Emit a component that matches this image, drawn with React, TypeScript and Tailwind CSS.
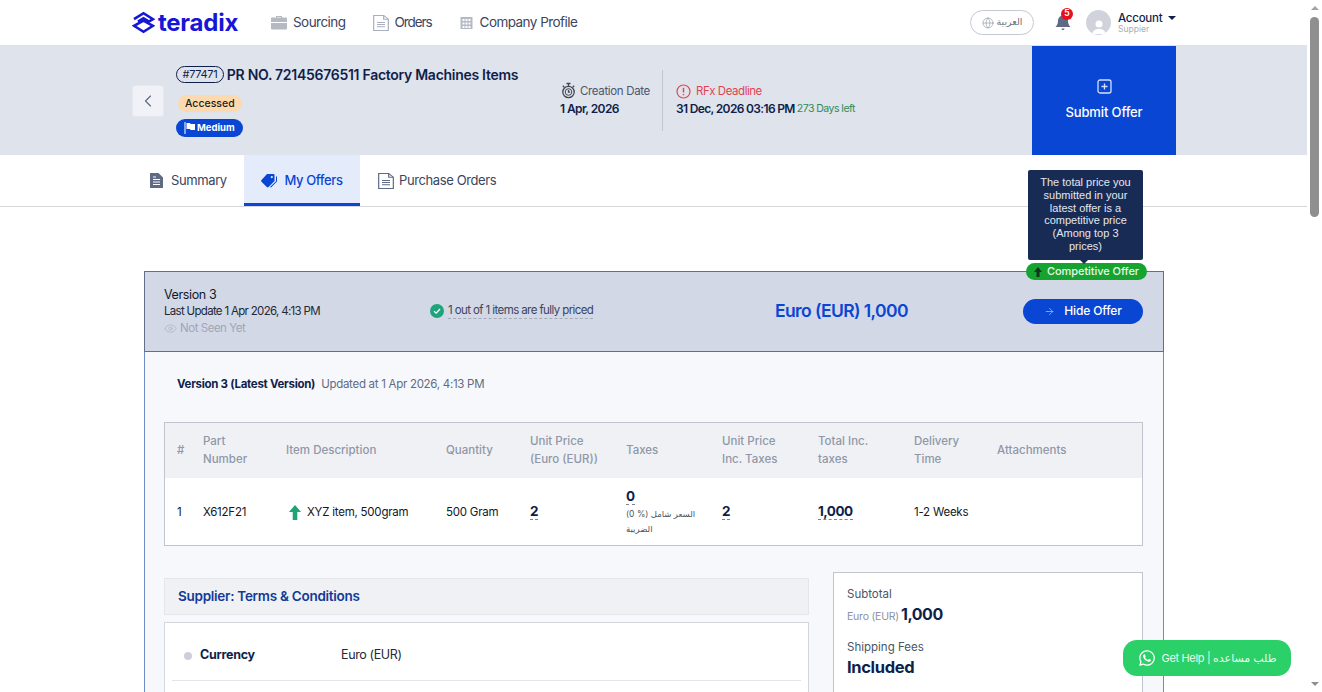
import { ArrowRight, ChevronLeft, Eye, Globe } from "lucide-react";
import { FaWhatsapp } from "react-icons/fa";

const NAVY = "text-[#0f1f4b]";

function Logo() {
  return (
    <div className="w-[107px] flex items-center gap-[3px] text-[#1616d8]">
      <svg width="23" height="23" viewBox="0 0 23 23" fill="none" stroke="currentColor" strokeWidth="2.6" strokeLinejoin="miter">
        <path d="M2 8.200 11.500 2.200l9.500 6-4 2.400-5.500-3.400-5.500 3.400" />
        <path d="M11.500 9.600 21 14.800l-9.500 6-9.500-6z" />
      </svg>
      <span className="text-[24px] leading-none font-bold tracking-[-0.01em]">teradix</span>
    </div>
  );
}

function NavItem({ icon, label, tracking = "tracking-[-0.04em]" }: { icon: React.ReactNode; label: string; tracking?: string }) {
  return (
    <div className={`flex items-center gap-[6px] text-[13.500px] text-[#3a4560] ${tracking}`}>
      {icon}
      <span>{label}</span>
    </div>
  );
}

function DocIcon({ color = "#a9afbd" }: { color?: string }) {
  return (
    <svg width="16" height="16" viewBox="2 0.500 12 15" preserveAspectRatio="none" fill="none" stroke={color} strokeWidth="0.900">
      <path d="M2.500 1h7.500l3.500 3.500V15h-11z" />
      <path d="M10 1v3.500h3.500M5 7.500h6M5 9.500h6M5 11.500h6" />
    </svg>
  );
}

function Header() {
  return (
    <header className="h-[46px] bg-white border-b border-[#dcdfe6] pl-[132px] pr-[131px] flex items-center">
      <Logo />
      <nav className="ml-[32px] flex items-center gap-[27px]">
        <NavItem
          label="Sourcing"
          icon={
            <svg width="16" height="15" viewBox="0 0 16 15" fill="#b4b9c4">
              <path d="M5 2.500V1h6v1.500h4a1 1 0 0 1 1 1V7H0V3.500a1 1 0 0 1 1-1zM6 2.500h4V2H6zM0 8h16v5.500a1 1 0 0 1-1 1H1a1 1 0 0 1-1-1z" />
            </svg>
          }
        />
        <NavItem label="Orders" tracking="tracking-[-0.08em]" icon={<DocIcon />} />
        <NavItem
          label="Company Profile"
          icon={
            <svg width="15" height="14" viewBox="0 0 14 14" fill="#b4b9c4">
              <path d="M1 1h12v12H1zM3 3v2h2V3zm3 0v2h2V3zm3 0v2h2V3zM3 6.500v2h2v-2zm3 0v2h2v-2zm3 0v2h2v-2zM3 10v2h2v-2zm3 0v2h2v-2zm3 0v2h2v-2z" fillRule="evenodd" />
            </svg>
          }
        />
      </nav>
      <div className="ml-auto flex items-center">
        <div className="h-[25px] w-[64px] rounded-full border border-[#c5c9d3] flex items-center justify-center gap-[3px] text-[9.500px] text-[#6b7280]">
          <Globe size={12} strokeWidth={1.200} className="text-[#8b92a3]" />
          <span>العربية</span>
        </div>
        <div className="relative ml-[20px] w-[18px] h-[18px]">
          <svg width="18" height="18" viewBox="0 0 18 18" fill="#5f6b85">
            <path d="M9 1.500c3.200 0 5 2.500 5 5.500 0 3 1.200 4.600 2.500 6H1.500C2.800 11.600 4 10 4 7c0-3 1.800-5.500 5-5.500zM7.500 14.500h3a1.500 1.500 0 0 1-3 0z" />
          </svg>
          <span className="absolute -top-[6px] left-[7px] w-[12px] h-[12px] rounded-full bg-[#e8101c] text-white text-[8.500px] font-bold flex items-center justify-center">5</span>
        </div>
        <div className="ml-[14px] w-[25px] h-[25px] rounded-full bg-[#d0d3dc] flex items-end justify-center overflow-hidden">
          <svg width="16" height="18" viewBox="0 0 16 18" fill="#fff">
            <circle cx="8" cy="7" r="3.500" />
            <path d="M1.500 17c0-3.500 2.800-5 6.500-5s6.500 1.500 6.500 5z" />
          </svg>
        </div>
        <div className="ml-[7px] w-[58px]">
          <div className={`flex items-center text-[11.500px] leading-[12px] tracking-[-0.02em] font-medium ${NAVY}`}>
            Account
            <span className="ml-[6px] w-0 h-0 border-x-[4px] border-x-transparent border-t-[4px] border-t-[#0f1f4b]" />
          </div>
          <div className="text-[8.500px] leading-[10px] text-[#a8adba]">Suppier</div>
        </div>
      </div>
    </header>
  );
}

function PrBand() {
  return (
    <section className="h-[109px] bg-[#dfe3eb] pl-[132px] pr-[131px] flex">
      <div className="mt-[39px] w-[32px] h-[32px] rounded-[3px] bg-[#f0f2f7] border border-[#e6e8ee] flex items-center justify-center">
        <ChevronLeft size={20} strokeWidth={1.400} className="text-[#5f6b85]" />
      </div>
      <div className="ml-[12px] pt-[18px] w-[384px]">
        <div className="flex items-center gap-[3px]">
          <span className={`h-[17px] px-[5.500px] rounded-full border border-[#0f1f4b] text-[11px] leading-[15px] tracking-[-0.03em] ${NAVY}`}>#77471</span>
          <span className={`text-[14px] font-semibold tracking-[-0.02em] whitespace-nowrap ${NAVY}`}>PR NO. 72145676511 Factory Machines Items</span>
        </div>
        <div className="mt-[10px] ml-[2px] w-fit h-[17px] px-[7px] rounded-full bg-[#fcd9ae] text-[10.500px] leading-[17px] font-medium text-[#1d1d1d]">Accessed</div>
        <div className="mt-[7px] w-fit h-[18px] px-[8px] rounded-full bg-[#0a46d4] text-white text-[9.500px] font-bold flex items-center gap-[2px]">
          <svg width="11" height="12" viewBox="0 0 11 12" fill="#fff">
            <path d="M0.500 0h1v12h-1zM2.500 1h3.500l.5 1H11v6H6.500L6 7H2.500z" />
          </svg>
          Medium
        </div>
      </div>
      <div className="mt-[36px] w-[102px] h-[48px]">
        <div className="flex items-center gap-[3px] text-[11.500px] leading-[16px] tracking-[-0.03em] text-[#4b5670]">
          <svg width="17" height="17" viewBox="0 0 17 17" fill="none" stroke="#3f4654" strokeWidth="1.300">
            <circle cx="8.500" cy="10" r="5.700" />
            <circle cx="8.500" cy="10" r="3.300" strokeWidth="1" />
            <path d="M6.500 1.500h4M8.500 1.500v3M8.500 8v2.200h1.600M2.800 3.800l1.500 1.400M14.200 3.800l-1.500 1.400" />
          </svg>
          Creation Date
        </div>
        <div className={`mt-[2px] text-[12px] leading-[16px] font-semibold tracking-[-0.05em] ${NAVY}`}>1 Apr, 2026</div>
      </div>
      <div className="mt-[24px] h-[61px] w-px bg-[#c2c6cf]" />
      <div className="ml-[13px] mt-[37px] w-[355px]">
        <div className="flex items-center gap-[5px] text-[11.500px] leading-[16px] tracking-[-0.04em] text-[#e04550]">
          <svg width="15" height="15" viewBox="0 0 15 15" fill="none" stroke="#e04550" strokeWidth="1.200">
            <circle cx="7.500" cy="7.500" r="6.500" />
            <path d="M7.500 3.800v4.600M7.500 10v1.200" strokeWidth="1.400" />
          </svg>
          RFx Deadline
        </div>
        <div className="mt-[2px] flex items-center gap-[2px] leading-[16px] whitespace-nowrap">
          <span className={`text-[12px] font-semibold tracking-[-0.055em] ${NAVY}`}>31 Dec, 2026 03:16 PM</span>
          <span className="text-[10.500px] tracking-[-0.05em] text-[#2e8b57]">273 Days left</span>
        </div>
      </div>
      <div className="w-[144px] bg-[#0a46d4] flex flex-col items-center text-white ml-auto">
        <svg className="mt-[33px]" width="15" height="15" viewBox="0 0 15 15" fill="none" stroke="#d5e0fa" strokeWidth="1.300">
          <rect x="1" y="1" width="13" height="13" rx="2" />
          <path d="M7.500 4.500v6M4.500 7.500h6" />
        </svg>
        <span className="mt-[9px] text-[13px] leading-[18px] font-medium tracking-[-0.01em]">Submit Offer</span>
      </div>
    </section>
  );
}

function Tabs() {
  return (
    <div className="h-[52px] border-b border-[#d4d6da] bg-white pl-[132px] flex text-[13px] tracking-[-0.03em] text-[#3a4560]">
      <div className="w-[112px] pl-[18px] flex items-center gap-[8px]">
        <svg width="13" height="15" viewBox="0 0 13 15" fill="#5f6b85">
          <path d="M0 0h8.500L13 4.500V15H0zM3 6v1h7V6zm0 2.500v1h7v-1zm0 2.500v1h7v-1zM3 3.500v1h3v-1z" fillRule="evenodd" />
        </svg>
        Summary
      </div>
      <div className="w-[116px] h-[51px] pt-[3px] bg-[#e4ebfa] border-b-[3px] border-[#0a46d4] flex items-center justify-center gap-[6px] text-[#0a46d4] font-medium">
        <svg width="17" height="14" viewBox="0 0 17 14" fill="#0a46d4">
          <path d="M6 0h6.500a1 1 0 0 1 1 1v6L7.500 13a1.200 1.200 0 0 1-1.700 0L.5 7.700a1.200 1.200 0 0 1 0-1.700zM10.800 2a1 1 0 1 0 0 2.200 1 1 0 0 0 0-2.200z" fillRule="evenodd" />
          <path d="M15 2.500h1v5L10 13.500l-1-.5 6-5.800z" />
        </svg>
        My Offers
      </div>
      <div className="pl-[18px] flex items-center gap-[5px]">
        <DocIcon color="#5f6b85" />
        Purchase Orders
      </div>
    </div>
  );
}

function OfferBar() {
  return (
    <div className="relative h-[81px] bg-[#d3d8e6] border border-[#5f6f8d] flex items-center">
      <div className="ml-[19px] w-[266px] text-[11.500px] leading-[17px]">
        <div className="text-[12.500px] tracking-[-0.03em] text-[#111827]">Version 3</div>
        <div className="text-[#1f2937] tracking-[-0.06em]">Last Update 1 Apr 2026, 4:13 PM</div>
        <div className="flex items-center gap-[3px] text-[#a0a6b5] tracking-[-0.04em]">
          <Eye size={13} strokeWidth={1} />
          Not Seen Yet
        </div>
      </div>
      <div className="flex items-center gap-[4px] w-[345px] mb-[2px] text-[11.500px] tracking-[-0.052em] text-[#3a4560]">
        <svg width="14" height="14" viewBox="0 0 14 14">
          <circle cx="7" cy="7" r="7" fill="#1ea37a" />
          <path d="M4 7.200 6.200 9.200 10 5" fill="none" stroke="#fff" strokeWidth="1.300" />
        </svg>
        <span className="border-b border-dashed border-[#a3aab8] leading-[15px]">1 out of 1 items are fully priced</span>
      </div>
      <div className="w-[248px] text-[17.500px] font-semibold tracking-[-0.035em] text-[#0a46d4]">Euro (EUR) 1,000</div>
      <div className="w-[120px] h-[25px] pb-[1px] rounded-full bg-[#0a46d4] flex items-center justify-center gap-[9px] text-white text-[12px] tracking-[-0.01em] font-medium">
        <ArrowRight size={11} strokeWidth={1.500} className="text-[#b9cbf5]" />
        Hide Offer
      </div>
      <div className="absolute -top-[9px] right-[16px] h-[17px] w-[121px] rounded-full bg-[#16a32f] flex items-center justify-center gap-[5px] text-[11px] font-medium tracking-[-0.005em] text-[#e9f8ea] whitespace-nowrap">
        <svg width="8" height="10" viewBox="0 0 8 10" fill="#12351b">
          <path d="M4 0 8 5H5.500v5h-3V5H0z" />
        </svg>
        Competitive Offer
      </div>
      <div className="absolute -top-[102px] right-[20px] w-[115px] h-[90px] rounded-[2px] bg-[#182b54] px-[8px] pt-[6px] text-center text-[11px] leading-[12.800px] text-[#e3e7f0] font-['Liberation_Sans',sans-serif]">
        The total price you submitted in your latest offer is a competitive price (Among top 3 prices)
        <span className="absolute -bottom-[4px] left-[52px] w-0 h-0 border-x-[4px] border-x-transparent border-t-[4px] border-t-[#182b54]" />
      </div>
    </div>
  );
}

const GRID = "grid grid-cols-[38px_83px_160px_84px_96px_96px_96px_96px_83px_1fr] items-center";

function DashedValue({ children }: { children: React.ReactNode }) {
  return (
    <span className={`border-b border-dashed border-[#7c8494] text-[13.500px] leading-[16px] font-bold tracking-[-0.04em] ${NAVY}`}>{children}</span>
  );
}

function ItemsTable() {
  const heads = [
    "#",
    "Part Number",
    "Item Description",
    "Quantity",
    "Unit Price (Euro (EUR))",
    "Taxes",
    "Unit Price Inc. Taxes",
    "Total Inc. taxes",
    "Delivery Time",
    "Attachments",
  ];
  return (
    <div className="border border-[#c0c4ce] bg-white h-[124px]">
      <div className={`${GRID} h-[55px] pb-[1px] bg-[#eff1f5] text-[11.500px] leading-[18px] font-medium text-[#9097a8]`}>
        {heads.map((h, i) => (
          <div key={h} className={i === 0 ? "pl-[12px]" : "pr-[20px]"}>
            {h}
          </div>
        ))}
      </div>
      <div className={`${GRID} h-[67px] pt-[2px] text-[11.500px] tracking-[-0.02em] text-[#111827]`}>
        <div className="pl-[12px]">1</div>
        <div>X612F21</div>
        <div className="pl-[3px] flex items-center gap-[6px]">
          <svg width="12" height="15" viewBox="0 0 12 15" fill="#1ea37a">
            <path d="M6 0 12 7H8.300v8H3.700V7H0z" />
          </svg>
          XYZ item, 500gram
        </div>
        <div>500 Gram</div>
        <div>
          <DashedValue>2</DashedValue>
        </div>
        <div className="pr-[16px]">
          <DashedValue>0</DashedValue>
          <div className="mt-[1px] text-[8.500px] leading-[15px] text-[#4b5563]" dir="rtl">
            <div className="text-left">السعر شامل (% 0)</div>
            <div className="text-left">الضريبة</div>
          </div>
        </div>
        <div>
          <DashedValue>2</DashedValue>
        </div>
        <div>
          <DashedValue>1,000</DashedValue>
        </div>
        <div>1-2 Weeks</div>
        <div />
      </div>
    </div>
  );
}

function Terms() {
  return (
    <div className="w-[645px]">
      <div className="mt-[6px] h-[37px] bg-[#eff1f5] border border-[#e4e6ec] pl-[13px] flex items-center text-[13.500px] font-semibold tracking-[-0.02em] text-[#123a96]">
        Supplier: Terms &amp; Conditions
      </div>
      <div className="mt-[7px] h-[200px] bg-white border border-[#d3d6de] px-[7px]">
        <div className="h-[58px] pt-[8px] border-b border-[#e2e4ea] flex items-center text-[12.500px]">
          <span className="ml-[12px] w-[8px] h-[8px] rounded-full bg-[#cdd0da]" />
          <span className={`ml-[8px] w-[141px] font-bold tracking-[-0.02em] ${NAVY}`}>Currency</span>
          <span className="text-[#1f2937] tracking-[-0.03em]">Euro (EUR)</span>
        </div>
      </div>
    </div>
  );
}

function Totals() {
  return (
    <div className="w-[310px] h-[200px] bg-white border border-[#c0c4ce] pl-[13px] pt-[13px]">
      <div className="text-[11.500px] leading-[16px] text-[#4b5563]">Subtotal</div>
      <div className="flex items-baseline gap-[2px]">
        <span className="text-[10.500px] tracking-[-0.02em] text-[#8b92a3]">Euro (EUR)</span>
        <span className={`text-[16px] leading-[24px] font-bold tracking-[-0.03em] ${NAVY}`}>1,000</span>
      </div>
      <div className="mt-[13px] text-[11.500px] leading-[16px] text-[#4b5563]">Shipping Fees</div>
      <div className={`text-[16.500px] leading-[24px] font-bold tracking-[-0.02em] ${NAVY}`}>Included</div>
    </div>
  );
}

function OfferCard() {
  return (
    <div className="ml-[144px] mt-[64px] w-[1020px]">
      <OfferBar />
      <div className="h-[400px] bg-[#f7f8fb] border-x border-[#6f8cc4] pl-[19px] pr-[20px]">
        <div className="h-[70px] pl-[13px] pt-[23px] flex items-start gap-[6px] text-[11.500px] leading-[18px] tracking-[-0.025em]">
          <span className={`font-bold ${NAVY}`}>Version 3 (Latest Version)</span>
          <span className="text-[#5f6b85]">Updated at 1 Apr 2026, 4:13 PM</span>
        </div>
        <ItemsTable />
        <div className="mt-[26px] flex justify-between">
          <Terms />
          <Totals />
        </div>
      </div>
    </div>
  );
}

function Scrollbar() {
  return (
    <div className="w-[15px] h-full bg-white flex flex-col items-center shrink-0">
      <span className="mt-[6px] w-0 h-0 border-x-[4px] border-x-transparent border-b-[4px] border-b-[#a3a3a3]" />
      <div className="mt-[7px] w-[9px] h-[200px] rounded-full bg-[#8f8f8f]" />
      <span className="mt-auto mb-[6px] w-0 h-0 border-x-[4px] border-x-transparent border-t-[4px] border-t-[#8f8f8f]" />
    </div>
  );
}

export default function App() {
  return (
    <div className="relative h-[692px] w-[1322px] flex overflow-hidden bg-white font-['Inter','DejaVu_Sans',sans-serif]">
      <main className="w-[1307px] h-full overflow-hidden">
        <Header />
        <PrBand />
        <Tabs />
        <OfferCard />
      </main>
      <Scrollbar />
      <div className="absolute left-[1123px] top-[640px] w-[168px] h-[36px] rounded-[14px] bg-[#2bd068] flex items-center justify-center gap-[6px] text-[11px] text-[#eafaf0] whitespace-nowrap">
        <FaWhatsapp size={18} className="text-white" />
        <span className="tracking-[-0.03em]">Get Help | طلب مساعده</span>
      </div>
    </div>
  );
}
